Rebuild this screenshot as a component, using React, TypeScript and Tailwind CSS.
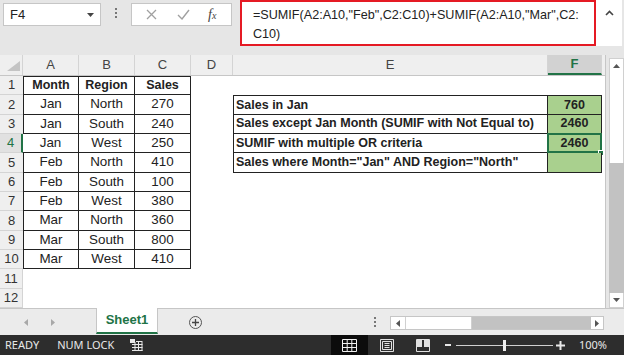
const table = [
  ["Month", "Region", "Sales"],
  ["Jan", "North", "270"],
  ["Jan", "South", "240"],
  ["Jan", "West", "250"],
  ["Feb", "North", "410"],
  ["Feb", "South", "100"],
  ["Feb", "West", "380"],
  ["Mar", "North", "360"],
  ["Mar", "South", "800"],
  ["Mar", "West", "410"],
];

const summary: Record<number, [string, string]> = {
  2: ["Sales in Jan", "760"],
  3: ["Sales except Jan Month (SUMIF with Not Equal to)", "2460"],
  4: ["SUMIF with multiple OR criteria", "2460"],
  5: ['Sales where Month="Jan" AND Region="North"', ""],
};

function FormulaBar() {
  return (
    <div className="flex h-[55px] shrink-0 items-start">
      <div className="ml-[3px] mt-[3px] flex h-[23px] w-[98px] items-center justify-between border border-[#c6c6c6] bg-white pl-[6px] pr-[6px] text-[13px] text-[#222]">
        <span>F4</span>
        <svg width="7" height="4" viewBox="0 0 7 4">
          <path d="M0 0h7L3.5 4z" fill="#444" />
        </svg>
      </div>
      <div className="mt-[8px] flex w-[30px] flex-col items-center gap-[2px]">
        <div className="h-[2px] w-[2px] bg-[#777]" />
        <div className="h-[2px] w-[2px] bg-[#777]" />
        <div className="h-[2px] w-[2px] bg-[#777]" />
      </div>
      <div className="mt-[3px] flex h-[23px] w-[101px] items-center border border-[#c6c6c6] bg-white">
        <svg className="ml-[14px]" width="11" height="11" viewBox="0 0 11 11">
          <path d="M1 1l9 9M10 1l-9 9" stroke="#a0a0a0" strokeWidth="1.3" />
        </svg>
        <svg className="ml-[20px]" width="13" height="11" viewBox="0 0 13 11">
          <path d="M1 6l4 4 7-9" stroke="#a0a0a0" strokeWidth="1.4" fill="none" />
        </svg>
        <span className="ml-[18px] font-['Liberation_Serif',serif] text-[14px] italic text-[#444]">
          f<span className="text-[10px]">x</span>
        </span>
      </div>
      <div className="ml-[8px] flex h-[46px] w-[382px] bg-white">
        <div className="h-full w-[356px] border-2 border-[#e51a24] pl-[11px] pt-[4px] text-[12.6px] leading-[19px] text-[#222]">
          <div>=SUMIF(A2:A10,"Feb",C2:C10)+SUMIF(A2:A10,"Mar",C2:</div>
          <div>C10)</div>
        </div>
        <div className="flex flex-1 justify-center pt-[10px]">
          <svg width="9" height="6" viewBox="0 0 9 6">
            <path d="M1 5l3.5-3.5L8 5" stroke="#444" strokeWidth="1.6" fill="none" />
          </svg>
        </div>
      </div>
    </div>
  );
}

function HeaderRow() {
  const cols: [string, string][] = [
    ["A", "w-[56px]"],
    ["B", "w-[56px]"],
    ["C", "w-[56px]"],
    ["D", "w-[42px]"],
    ["E", "w-[315px]"],
  ];
  return (
    <div className="flex h-[21px] shrink-0 border-b border-[#c6c6c6] bg-[#efefef] text-[13px] text-[#444]">
      <div className="flex w-[23px] shrink-0 items-end justify-end border-r border-[#d4d4d4] pb-[4px] pr-[2px]">
        <svg width="13" height="10" viewBox="0 0 13 10">
          <path d="M13 0v10H0z" fill="#c4c4c4" />
        </svg>
      </div>
      {cols.map(([c, w]) => (
        <div key={c} className={`${w} flex shrink-0 items-center justify-center border-r border-[#d4d4d4]`}>
          {c}
        </div>
      ))}
      <div className="flex w-[54px] shrink-0 items-center justify-center border-b-2 border-r border-b-[#217346] border-r-[#d4d4d4] bg-[#d2d2d2] font-bold text-[#217346]">
        F
      </div>
      <div className="flex-1" />
    </div>
  );
}

function SheetRow({ n }: { n: number }) {
  const d = table[n - 1];
  const s = summary[n];
  const active = n === 4;
  const head = n === 1;
  const rowHead = active
    ? "flex w-[23px] shrink-0 items-center justify-center border-b border-r-2 border-b-[#d4d4d4] border-r-[#217346] bg-[#e1e1e1] text-[#217346]"
    : d
      ? "flex w-[23px] shrink-0 items-center justify-center border-b border-[#d4d4d4] bg-[#efefef] text-[#333]"
      : "flex w-[23px] shrink-0 items-center justify-center border-b border-r border-[#d4d4d4] bg-[#efefef] text-[#333]";
  const cellText = head ? "text-[12.5px] font-bold" : "text-[13.4px]";
  return (
    <div className="flex h-[19.33px] shrink-0">
      <div className={`${rowHead} text-[13px]`}>{n}</div>
      {d ? (
        <>
          <div className={`flex w-[56px] shrink-0 items-center justify-center border-b border-r border-[#222] ${active ? "" : "border-l"} ${head ? "border-t" : ""} ${cellText}`}>
            {d[0]}
          </div>
          <div className={`flex w-[56px] shrink-0 items-center justify-center border-b border-r border-[#222] ${head ? "border-t" : ""} ${cellText}`}>
            {d[1]}
          </div>
          <div className={`flex w-[56px] shrink-0 items-center justify-center border-b border-r border-[#222] ${head ? "border-t" : ""} ${cellText}`}>
            {d[2]}
          </div>
        </>
      ) : (
        <div className="w-[168px] shrink-0" />
      )}
      <div className="w-[42px] shrink-0" />
      {s ? (
        <>
          <div className={`flex w-[315px] shrink-0 items-center border-b border-l border-r border-[#222] pl-[2px] text-[12.5px] font-bold ${n === 2 ? "border-t" : ""}`}>
            {s[0]}
          </div>
          <div className={`relative flex w-[54px] shrink-0 items-center justify-center border-b border-r border-[#222] bg-[#a9d08e] text-[12.5px] font-bold ${n === 2 ? "border-t" : ""}`}>
            {s[1]}
            {active && (
              <>
                <div className="absolute inset-[-1px] border-2 border-[#217346]" />
                <div className="absolute bottom-[-4px] right-[-3px] h-[6px] w-[6px] border border-white bg-[#217346]" />
              </>
            )}
          </div>
        </>
      ) : null}
      <div className="flex-1" />
    </div>
  );
}

function VScroll() {
  return (
    <div className="flex w-[18px] shrink-0 flex-col bg-[#e6e6e6] pl-[3px] pt-[3px]">
      <div className="flex h-[15px] items-center justify-center border border-b-0 border-[#d0d0d0] bg-white">
        <svg width="7" height="4" viewBox="0 0 7 4">
          <path d="M0 4h7L3.5 0z" fill="#555" />
        </svg>
      </div>
      <div className="h-[90px] border-x border-[#d0d0d0] bg-white" />
      <div className="flex-1 bg-[#c2c2c2]" />
      <div className="flex h-[15px] items-center justify-center border border-t-0 border-[#d0d0d0] bg-white">
        <svg width="7" height="4" viewBox="0 0 7 4">
          <path d="M0 0h7L3.5 4z" fill="#555" />
        </svg>
      </div>
    </div>
  );
}

function TabBar() {
  return (
    <div className="flex h-[27px] shrink-0 items-start border-t border-[#c6c6c6] bg-[#ebebeb]">
      <div className="flex h-[26px] w-[96px] items-center">
        <svg className="ml-[24px]" width="4" height="7" viewBox="0 0 4 7">
          <path d="M4 0v7L0 3.5z" fill="#a8a8a8" />
        </svg>
        <svg className="ml-[23px]" width="4" height="7" viewBox="0 0 4 7">
          <path d="M0 0v7l4-3.5z" fill="#a8a8a8" />
        </svg>
      </div>
      <div className="-mt-px flex h-[26px] w-[62px] items-center justify-center border-x border-b-2 border-x-[#c6c6c6] border-b-[#217346] bg-white text-[13px] font-bold text-[#217346]">
        Sheet1
      </div>
      <div className="ml-[31px] mt-[7px] flex h-[13px] w-[13px] items-center justify-center rounded-full border border-[#555]">
        <svg width="7" height="7" viewBox="0 0 7 7">
          <path d="M3.5 0v7M0 3.5h7" stroke="#444" strokeWidth="1.3" />
        </svg>
      </div>
      <div className="ml-[172px] mt-[8px] flex flex-col gap-[2px]">
        <div className="h-[2px] w-[2px] bg-[#777]" />
        <div className="h-[2px] w-[2px] bg-[#777]" />
        <div className="h-[2px] w-[2px] bg-[#777]" />
      </div>
      <div className="ml-[14px] mt-[7px] flex h-[14px] w-[214px] border border-[#c6c6c6] bg-white">
        <div className="flex w-[14px] items-center justify-center">
          <svg width="4" height="7" viewBox="0 0 4 7">
            <path d="M4 0v7L0 3.5z" fill="#555" />
          </svg>
        </div>
        <div className="w-[67px] border-x border-[#d0d0d0] bg-white" />
        <div className="flex-1 bg-[#c2c2c2]" />
        <div className="flex w-[12px] items-center justify-center">
          <svg width="4" height="7" viewBox="0 0 4 7">
            <path d="M0 0v7l4-3.5z" fill="#555" />
          </svg>
        </div>
      </div>
    </div>
  );
}

function StatusBar() {
  return (
    <div className="flex h-[20px] shrink-0 items-center bg-[#2d2d2d] font-['Noto_Sans',sans-serif] text-[11px] text-[#e8e8e8]">
      <span className="ml-[5px]">READY</span>
      <span className="ml-[18px]">NUM LOCK</span>
      <svg className="ml-[16px]" width="13" height="13" viewBox="0 0 13 13">
        <rect x="0" y="0" width="5" height="4" fill="#e8e8e8" />
        <path d="M2 5.5h10.5M2 8.5h10.5M2 11.5h10.5M5 3v9M8.5 3v9M12 3v9M6 2.5h6.5" stroke="#e8e8e8" strokeWidth="1" />
      </svg>
      <div className="ml-auto flex h-full w-[37px] items-center justify-center bg-[#0c0c0c]">
        <svg width="15" height="13" viewBox="0 0 15 13">
          <path d="M0.5 0.5h14v12h-14zM5.2 0.5v12M9.8 0.5v12M0.5 4.5h14M0.5 8.5h14" stroke="#f0f0f0" strokeWidth="1" fill="none" />
        </svg>
      </div>
      <div className="flex w-[38px] justify-center">
        <svg width="14" height="13" viewBox="0 0 14 13">
          <path d="M0.5 0.5h13v12h-13zM2.5 2.5h9v8h-9zM4.5 4.5h5M4.5 6.5h5M4.5 8.5h5" stroke="#e0e0e0" strokeWidth="1" fill="none" />
        </svg>
      </div>
      <div className="flex w-[34px] justify-center">
        <svg width="14" height="13" viewBox="0 0 14 13">
          <path d="M0.5 0.5h13v12h-13z" stroke="#e0e0e0" strokeWidth="1" fill="none" />
          <rect x="1" y="1" width="5" height="7" fill="#e0e0e0" />
          <rect x="8" y="1" width="5" height="7" fill="#e0e0e0" />
        </svg>
      </div>
      <div className="flex w-[16px] justify-center">
        <div className="h-[2px] w-[6px] bg-[#e8e8e8]" />
      </div>
      <div className="relative flex h-full w-[97px] items-center">
        <div className="h-px w-full bg-[#cfcfcf]" />
        <div className="absolute left-[47px] top-[5px] h-[11px] w-[3px] bg-[#f0f0f0]" />
      </div>
      <div className="flex w-[16px] justify-center">
        <svg width="9" height="9" viewBox="0 0 9 9">
          <path d="M4.5 0v9M0 4.5h9" stroke="#e8e8e8" strokeWidth="2" />
        </svg>
      </div>
      <span className="ml-[10px] mr-[17px]">100%</span>
    </div>
  );
}

export default function App() {
  return (
    <div className="flex h-[355px] w-[624px] flex-col overflow-hidden bg-[#e6e6e6] font-['Liberation_Sans',Arial,sans-serif] text-[#222]">
      <FormulaBar />
      <div className="flex h-[253px] shrink-0">
        <div className="flex w-[606px] shrink-0 flex-col border-r border-[#c6c6c6] bg-white">
          <HeaderRow />
          {Array.from({ length: 12 }, (_, i) => (
            <SheetRow key={i} n={i + 1} />
          ))}
        </div>
        <VScroll />
      </div>
      <TabBar />
      <StatusBar />
    </div>
  );
}
